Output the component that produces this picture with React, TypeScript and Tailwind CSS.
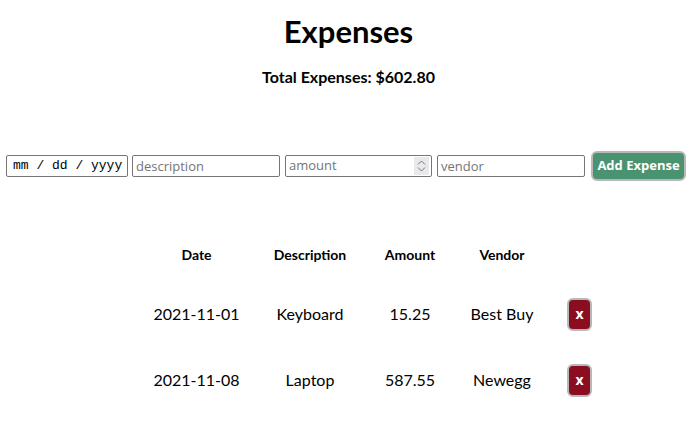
const expenses = [
  { date: "2021-11-01", description: "Keyboard", amount: "15.25", vendor: "Best Buy" },
  { date: "2021-11-08", description: "Laptop", amount: "587.55", vendor: "Newegg" },
];

const inputCls =
  "h-[22px] border border-[#767676] rounded-[2px] px-[3px] text-[13px] placeholder:text-[#757575] bg-white outline-none";

export default function App() {
  return (
    <div className="w-[697px] h-[422px] bg-white text-black font-['Lato',sans-serif]">
      <h1 className="pt-[12px] text-center text-[31px] font-bold leading-[38px]">Expenses</h1>
      <p className="mt-[18px] text-center text-[16px] font-bold leading-[18px]">Total Expenses: $602.80</p>

      <div className="mt-[65px] flex items-center justify-center pr-[5px]">
        <div className={`${inputCls} w-[122px] flex items-center text-black font-['Liberation_Mono',monospace] text-[11px] pl-[6px]`}>
          mm / dd / yyyy
        </div>
        <input className={`${inputCls} ml-[4px] w-[148px] text-black font-['Open_Sans',sans-serif]`} placeholder="description" />
        <div className={`${inputCls} ml-[5px] w-[147px] flex items-center justify-between pr-[2px] font-['Open_Sans',sans-serif] text-[#757575]`}>
          <span>amount</span>
          <span className="w-[15px] h-[18px] bg-[#e9e9ed] flex items-center justify-center">
            <svg width="9" height="14" viewBox="0 0 9 14" fill="none" stroke="#777" strokeWidth="1">
              <path d="M1 5.5 L4.5 2 L8 5.5" />
              <path d="M1 8.5 L4.5 12 L8 8.5" />
            </svg>
          </span>
        </div>
        <input className={`${inputCls} ml-[5px] w-[148px] text-black font-['Open_Sans',sans-serif]`} placeholder="vendor" />
        <button className="ml-[6px] w-[95px] h-[30px] rounded-[6px] bg-[#4a9370] border-2 border-[#b8b8b8] text-white text-[13px] font-bold font-['Open_Sans',sans-serif] whitespace-nowrap">
          Add Expense
        </button>
      </div>

      <table className="mt-[46px] ml-[139px] text-center border-collapse">
        <thead>
          <tr className="h-[54px]">
            <th className="w-[115px] text-[14px] font-bold">Date</th>
            <th className="w-[112px] text-[14px] font-bold">Description</th>
            <th className="w-[88px] text-[14px] font-bold">Amount</th>
            <th className="w-[96px] text-[14px] font-bold">Vendor</th>
            <th className="w-[60px]"></th>
          </tr>
        </thead>
        <tbody>
          {expenses.map((e) => (
            <tr key={e.date} className="h-[66px] text-[16px]">
              <td>{e.date}</td>
              <td>{e.description}</td>
              <td>{e.amount}</td>
              <td>{e.vendor}</td>
              <td className="text-left pl-[17px]">
                <button className="w-[25px] h-[33px] rounded-[6px] bg-[#8a0e1f] border-2 border-[#b8b8b8] text-white text-[14px] font-bold font-['Open_Sans',sans-serif] leading-none">
                  x
                </button>
              </td>
            </tr>
          ))}
        </tbody>
      </table>
    </div>
  );
}
